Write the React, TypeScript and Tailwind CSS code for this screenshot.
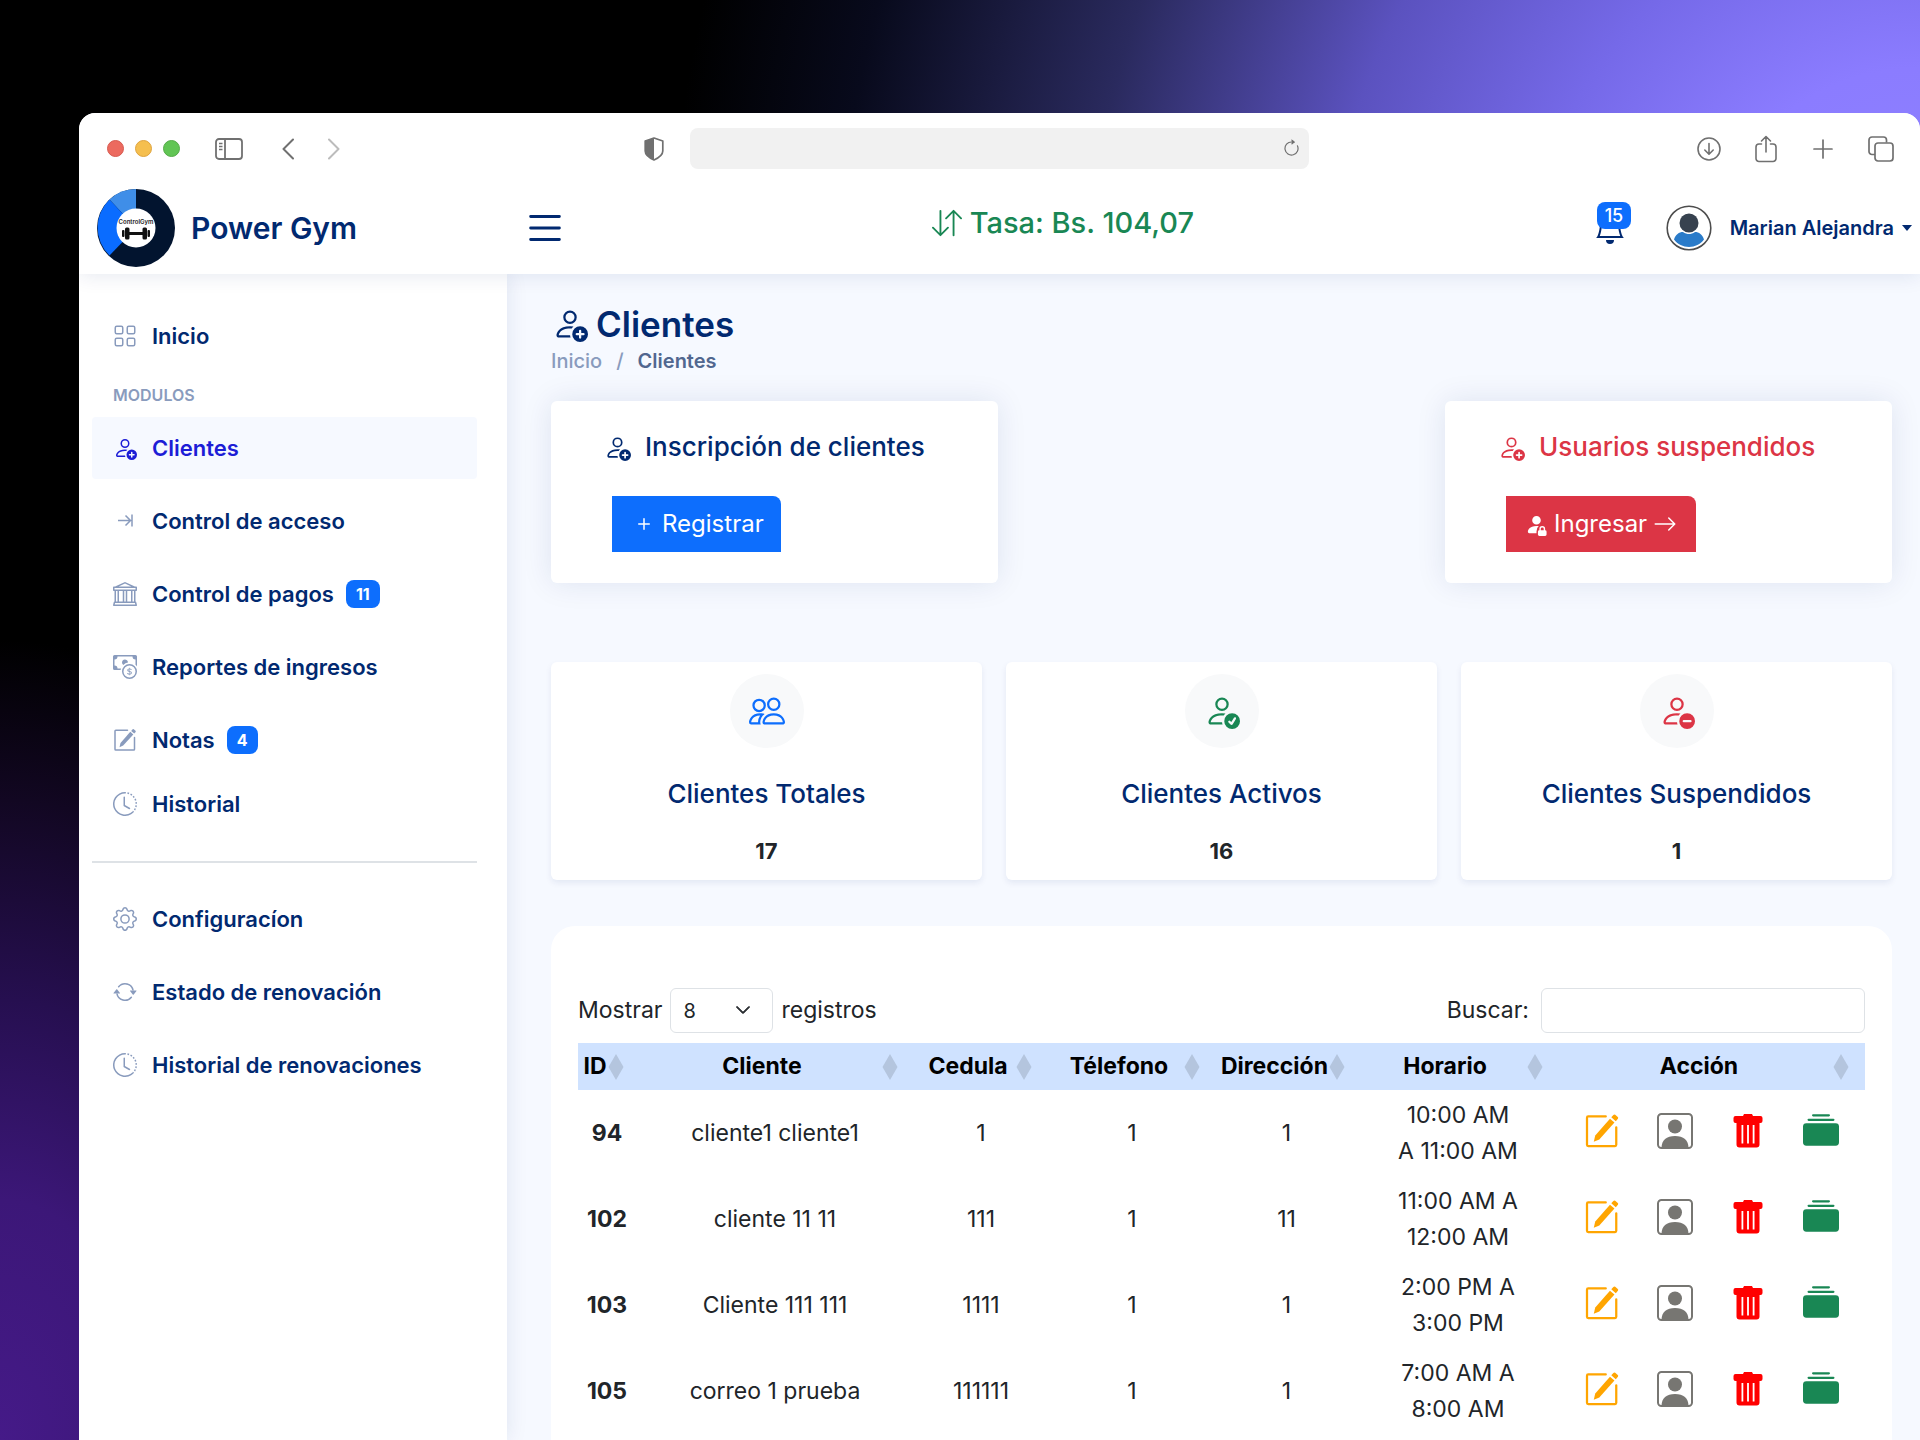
import { useState, type ReactNode } from "react";
import type { IconType } from "react-icons";
import {
  BsArrowClockwise,
  BsArrowDownUp,
  BsArrowRepeat,
  BsArrowRight,
  BsBank,
  BsBell,
  BsCashCoin,
  BsChevronDown,
  BsClockHistory,
  BsCollectionFill,
  BsGear,
  BsGrid,
  BsList,
  BsPeople,
  BsPersonAdd,
  BsPersonCheck,
  BsPersonDash,
  BsPersonFillLock,
  BsPlus,
} from "react-icons/bs";

type NavItem = {
  label: string;
  icon: ReactNode;
  badge?: number;
  active?: boolean;
  compact?: boolean;
};

type Cliente = {
  id: number;
  nombre: string;
  cedula: string;
  telefono: string;
  direccion: string;
  horario: [string, string];
};

const MODULOS: NavItem[] = [
  { label: "Clientes", icon: <BsPersonAdd />, active: true },
  { label: "Control de acceso", icon: <IconArrowToBar /> },
  { label: "Control de pagos", icon: <BsBank />, badge: 11 },
  { label: "Reportes de ingresos", icon: <BsCashCoin /> },
  { label: "Notas", icon: <IconEdit className="size-6" />, badge: 4 },
  { label: "Historial", icon: <BsClockHistory />, compact: true },
];

const AJUSTES: NavItem[] = [
  { label: "Configuracíon", icon: <BsGear /> },
  { label: "Estado de renovación", icon: <BsArrowRepeat /> },
  { label: "Historial de renovaciones", icon: <BsClockHistory /> },
];

const STATS: { label: string; value: number; icon: IconType; color: string }[] = [
  { label: "Clientes Totales", value: 17, icon: BsPeople, color: "text-[#0d6efd]" },
  { label: "Clientes Activos", value: 16, icon: BsPersonCheck, color: "text-[#198754]" },
  { label: "Clientes Suspendidos", value: 1, icon: BsPersonDash, color: "text-[#dc3545]" },
];

const COLUMNS = [
  { label: "ID", width: "w-[58px]", pad: "pr-3 pl-1" },
  { label: "Cliente", width: "", pad: "pr-4 pl-1.5" },
  { label: "Cedula", width: "w-[134px]", pad: "pr-4 pl-1.5" },
  { label: "Télefono", width: "w-[168px]", pad: "pr-4 pl-1.5" },
  { label: "Dirección", width: "w-[141px]", pad: "pr-3 pl-1" },
  { label: "Horario", width: "w-[202px]", pad: "pr-4 pl-1.5" },
  { label: "Acción", width: "w-[306px]", pad: "pr-4 pl-1.5" },
];

const CLIENTES: Cliente[] = [
  { id: 94, nombre: "cliente1 cliente1", cedula: "1", telefono: "1", direccion: "1", horario: ["10:00 AM", "A 11:00 AM"] },
  { id: 102, nombre: "cliente 11 11", cedula: "111", telefono: "1", direccion: "11", horario: ["11:00 AM A", "12:00 AM"] },
  { id: 103, nombre: "Cliente 111 111", cedula: "1111", telefono: "1", direccion: "1", horario: ["2:00 PM A", "3:00 PM"] },
  { id: 105, nombre: "correo 1 prueba", cedula: "111111", telefono: "1", direccion: "1", horario: ["7:00 AM A", "8:00 AM"] },
];

const ACCIONES = [
  { label: "Editar", icon: IconEdit, style: "size-9 text-[#ffa500]" },
  { label: "Ver perfil", icon: IconProfile, style: "size-9 text-[#777672]" },
  { label: "Eliminar", icon: IconTrash, style: "size-9 text-[#ff0000]" },
  { label: "Renovaciones", icon: BsCollectionFill, style: "size-9 text-[#198754]" },
];

type IconProps = { className?: string };

function IconArrowToBar() {
  return (
    <svg viewBox="0 0 24 24" fill="none" stroke="currentColor" strokeWidth="1.5" aria-hidden>
      <path d="M5 11.5h12M12.5 6.5l5 5-5 5M19 5.5v12" />
    </svg>
  );
}

function IconEdit({ className }: IconProps) {
  return (
    <svg viewBox="0 0 24 24" className={className} aria-hidden>
      <path d="M14.5 2.3H2.8a.8.8 0 0 0-.8.8v18.100a.8.8 0 0 0 .8.8h17.900a.8.8 0 0 0 .8-.8V9.500" fill="none" stroke="currentColor" strokeWidth="1.500" strokeLinecap="round" />
      <path d="M17.300 3.800 20.300 6.400 10.200 17.600 6.500 19.200 7.500 15Z" fill="currentColor" />
      <path d="M18.200 2.900 19.600 1.300a.9.9 0 0 1 1.200-.1l1.700 1.500a.9.9 0 0 1 .1 1.200L21.200 5.500Z" fill="currentColor" />
    </svg>
  );
}

function IconProfile({ className }: IconProps) {
  return (
    <svg viewBox="0 0 36 36" className={className} aria-hidden>
      <rect x="1" y="1" width="34" height="34" rx="3.500" fill="none" stroke="currentColor" strokeWidth="2" />
      <circle cx="18" cy="13.500" r="7" fill="currentColor" />
      <path d="M4.500 35c0-8 5-12 13.500-12s13.500 4 13.500 12Z" fill="currentColor" />
    </svg>
  );
}

function IconTrash({ className }: IconProps) {
  return (
    <svg viewBox="0 0 36 36" className={className} aria-hidden>
      <path
        fillRule="evenodd"
        fill="currentColor"
        d="M14 1h8l1 2h7.500a2 2 0 0 1 2 2v3a2 2 0 0 1-2 2H29.500v21.500a3 3 0 0 1-3 3h-17a3 3 0 0 1-3-3V10h-1a2 2 0 0 1-2-2V5a2 2 0 0 1 2-2H13ZM11.500 12v18.500h1.800V12ZM17.100 12v18.500h1.800V12ZM22.700 12v18.500h1.800V12Z"
      />
    </svg>
  );
}

function Logo() {
  return (
    <svg viewBox="0 0 78 78" className="size-[78px] shrink-0" role="img" aria-label="ControlGym">
      <circle cx="39" cy="39" r="39" fill="#02142f" />
      <path d="M39 39V0A39 39 0 0 0 12.5 10.4Z" fill="#3f8ee8" />
      <path d="M39 39 12.5 10.4A39 39 0 0 0 12.5 66.5Z" fill="#0a6cff" />
      <circle cx="39" cy="39" r="19.5" fill="#fff" />
      <text x="39" y="35" textAnchor="middle" fontSize="6" fontWeight="600" fill="#222">
        ControlGym
      </text>
      <g fill="#111">
        <rect x="25" y="41" width="2.5" height="7" rx="1" />
        <rect x="28" y="38.5" width="4.5" height="12" rx="1.5" />
        <rect x="32" y="43" width="14" height="3" />
        <rect x="45.5" y="38.5" width="4.5" height="12" rx="1.5" />
        <rect x="50.5" y="41" width="2.5" height="7" rx="1" />
      </g>
    </svg>
  );
}

function Avatar() {
  return (
    <svg viewBox="0 0 46 46" className="size-[46px]" aria-hidden>
      <circle cx="23" cy="23" r="21.8" fill="#fff" stroke="#4d4d4d" strokeWidth="1.6" />
      <circle cx="23" cy="18" r="9.5" fill="#37424f" />
      <path d="M8 34.5c1.500-5 5-7.500 9-7.500 2 1.400 4 2 6 2s4-.6 6-2c4 0 7.500 2.500 9 7.500-3.600 4.700-9 7.500-15 7.500S11.600 39.200 8 34.500Z" fill="#2a7bc9" />
    </svg>
  );
}

const chromeBtn = "flex items-center justify-center text-[#707070]";

function BrowserBar() {
  return (
    <div className="flex h-[71px] items-center pr-[26px] pl-7">
      <div className="flex gap-[11px]">
        <span className="size-[17px] rounded-full border border-[#d75a50] bg-[#ec6a5f]" />
        <span className="size-[17px] rounded-full border border-[#dfa43f] bg-[#f5bf4f]" />
        <span className="size-[17px] rounded-full border border-[#55ab48] bg-[#61c554]" />
      </div>
      <button type="button" aria-label="Barra lateral" className={`ml-[35px] ${chromeBtn}`}>
        <svg viewBox="0 0 28 22" className="h-[22px] w-7" fill="none" stroke="currentColor" strokeWidth="1.8">
          <rect x="1" y="1" width="26" height="20" rx="3" />
          <path d="M10 1v20" />
          <path d="M4 5.500h3.500M4 8.500h3.500M4 11.500h3.500" strokeWidth="1.3" />
        </svg>
      </button>
      <button type="button" aria-label="Atrás" className={`ml-[39px] ${chromeBtn}`}>
        <svg viewBox="0 0 12 22" className="h-[22px] w-3" fill="none" stroke="currentColor" strokeWidth="2" strokeLinecap="round" strokeLinejoin="round">
          <path d="M11 1.500 1.500 11l9.500 9.500" />
        </svg>
      </button>
      <button type="button" aria-label="Adelante" className="ml-[34px] flex text-[#bcbcbc]">
        <svg viewBox="0 0 12 22" className="h-[22px] w-3" fill="none" stroke="currentColor" strokeWidth="2" strokeLinecap="round" strokeLinejoin="round">
          <path d="M1 1.500 10.500 11 1 20.500" />
        </svg>
      </button>
      <div className="flex min-w-0 flex-1 items-center justify-center gap-[26px] pr-[84px]">
        <svg viewBox="0 0 20 24" className="h-6 w-5 shrink-0 text-[#707070]" aria-hidden>
          <path d="M10 1 18.800 4v10c0 4-4 6.800-8.800 9-4.800-2.200-8.800-5-8.800-9V4Z" fill="none" stroke="currentColor" strokeWidth="1.7" strokeLinejoin="round" />
          <path d="M10 1v22c-4.800-2.200-8.800-5-8.800-9V4Z" fill="currentColor" />
        </svg>
        <div className="flex h-[41px] w-[619px] items-center rounded-lg bg-[#f1f1f1] pr-2">
          <input type="text" aria-label="Dirección web" className="min-w-0 flex-1 bg-transparent px-3 outline-none" />
          <button type="button" aria-label="Recargar" className={chromeBtn}>
            <BsArrowClockwise className="size-[19px]" />
          </button>
        </div>
      </div>
      <div className="flex items-center gap-[33px]">
        <button type="button" aria-label="Descargas" className={chromeBtn}>
          <svg viewBox="0 0 24 24" className="size-6" fill="none" stroke="currentColor" strokeWidth="1.6" strokeLinecap="round" strokeLinejoin="round">
            <circle cx="12" cy="12" r="11" />
            <path d="M12 6.500v10.500M7.800 13l4.200 4.200 4.200-4.200" />
          </svg>
        </button>
        <button type="button" aria-label="Compartir" className={chromeBtn}>
          <svg viewBox="0 0 24 28" className="h-7 w-6" fill="none" stroke="currentColor" strokeWidth="1.6" strokeLinecap="round" strokeLinejoin="round">
            <path d="M7.500 9H5a3 3 0 0 0-3 3v11.500a3 3 0 0 0 3 3h14a3 3 0 0 0 3-3V12a3 3 0 0 0-3-3h-2.500M12 17V1.500M7.500 6 12 1.500 16.500 6" />
          </svg>
        </button>
        <button type="button" aria-label="Nueva pestaña" className={chromeBtn}>
          <svg viewBox="0 0 24 24" className="size-6" fill="none" stroke="currentColor" strokeWidth="1.7" strokeLinecap="round">
            <path d="M12 3v18M3 12h18" />
          </svg>
        </button>
        <button type="button" aria-label="Pestañas" className={chromeBtn}>
          <svg viewBox="0 0 26 26" className="size-[26px]" fill="none" stroke="currentColor" strokeWidth="1.7">
            <path d="M7 18.500H4a3 3 0 0 1-3-3V4a3 3 0 0 1 3-3h11.500a3 3 0 0 1 3 3v2.500" />
            <rect x="7" y="7" width="18" height="18" rx="3" />
          </svg>
        </button>
      </div>
    </div>
  );
}

function Header() {
  return (
    <header className="relative z-20 rounded-t-2xl bg-white shadow-[0_2px_20px_rgba(1,41,112,0.1)]">
      <BrowserBar />
      <div className="flex h-[90px] items-center pr-2 pb-0.5 pl-[18px]">
        <a href="#" className="flex w-[355px] items-center gap-4 text-3xl font-semibold text-[#012970]">
          <Logo />
          Power Gym
        </a>
        <button type="button" aria-label="Menú" className="ml-[70px] text-[#012970]">
          <BsList className="size-[46px]" />
        </button>
        <p className="flex flex-1 items-center justify-center pr-9 pb-2.5 text-[29px] font-medium text-[#198754]">
          <span className="flex items-center gap-2">
            <BsArrowDownUp className="size-[30px]" />
            Tasa: Bs. 104,07
          </span>
        </p>
        <button type="button" aria-label="15 notificaciones" className="relative text-[#012970]">
          <BsBell className="size-8" />
          <span className="absolute -top-2.5 left-[3px] rounded-lg bg-[#0d6efd] px-2 text-lg leading-[27px] font-medium text-white">15</span>
        </button>
        <button type="button" className="ml-10 flex items-center text-xl font-semibold text-[#012970]">
          <Avatar />
          <span className="ml-[18px]">Marian Alejandra</span>
          <svg viewBox="0 0 10 6" className="ml-2 h-1.5 w-2.5" aria-hidden>
            <path d="M0 0h10L5 6Z" fill="currentColor" />
          </svg>
        </button>
      </div>
    </header>
  );
}

function NavLink({ item }: { item: NavItem }) {
  const look = item.active ? "bg-[#f6f9ff] text-[#1d1dd6]" : "text-[#012970]";
  const height = item.compact ? "h-[44px]" : "h-[62px]";
  return (
    <li>
      <a href="#" className={`flex items-center rounded pl-[21px] text-[22px] font-semibold ${height} ${look}`}>
        <span
          className={`mr-[15px] flex size-6 shrink-0 items-center justify-center text-2xl [&>svg]:max-h-6 [&>svg]:max-w-6 ${
            item.active ? "" : "text-[#899bbd]"
          }`}
        >
          {item.icon}
        </span>
        {item.label}
        {item.badge !== undefined && (
          <span className="ml-3 rounded-lg bg-[#0d6efd] px-2.5 text-base leading-7 font-bold text-white">{item.badge}</span>
        )}
      </a>
    </li>
  );
}

function Sidebar() {
  return (
    <aside className="relative z-10 w-[428px] shrink-0 bg-white pt-[31px] pr-[30px] pl-[13px] shadow-[0_0_20px_rgba(1,41,112,0.1)]">
      <nav>
        <ul>
          <NavLink item={{ label: "Inicio", icon: <BsGrid /> }} />
        </ul>
        <p className="mt-4 mb-2.5 pl-[21px] text-base leading-6 font-semibold text-[#899bbd] uppercase">Modulos</p>
        <ul className="flex flex-col gap-[11px]">
          {MODULOS.map((item) => (
            <NavLink key={item.label} item={item} />
          ))}
        </ul>
        <hr className="mt-[35px] mb-[25px] border-t-2 border-[#dee2e6]" />
        <ul className="flex flex-col gap-[11px]">
          {AJUSTES.map((item) => (
            <NavLink key={item.label} item={item} />
          ))}
        </ul>
      </nav>
    </aside>
  );
}

const actionCard = "h-[182px] rounded-md bg-white pt-7 shadow-[0_0_30px_rgba(1,41,112,0.1)]";
const actionTitle = "flex items-center gap-3.5 pl-[53px] text-[26px] leading-9 font-medium";
const actionBtn = "mt-[31px] ml-[61px] flex h-14 items-center rounded-tr-lg text-2xl text-white";

function TopCards() {
  return (
    <div className="mt-[26px] grid grid-cols-3">
      <section className={actionCard}>
        <h2 className={`text-[#012970] ${actionTitle}`}>
          <BsPersonAdd className="size-[27px]" />
          Inscripción de clientes
        </h2>
        <button type="button" className={`bg-[#0d6efd] pr-[17px] pl-5 ${actionBtn}`}>
          <BsPlus className="mr-1.5 size-6" />
          Registrar
        </button>
      </section>
      <section className={`col-start-3 ${actionCard}`}>
        <h2 className={`text-[#dc3545] ${actionTitle}`}>
          <BsPersonAdd className="size-[27px]" />
          Usuarios suspendidos
        </h2>
        <button type="button" className={`bg-[#dc3545] px-[19px] ${actionBtn}`}>
          <BsPersonFillLock className="mr-1.5 size-[23px]" />
          Ingresar
          <BsArrowRight className="ml-1.5 size-6" />
        </button>
      </section>
    </div>
  );
}

function Stats() {
  return (
    <div className="mt-[79px] grid grid-cols-3 gap-6">
      {STATS.map(({ label, value, icon: Icon, color }) => (
        <section key={label} className="flex h-[218px] flex-col items-center rounded-md bg-white pt-3 shadow-[0_3px_6px_rgba(1,41,112,0.08)]">
          <span className={`flex size-[74px] items-center justify-center rounded-full bg-[#f8f9fa] ${color}`}>
            <Icon className="size-9" />
          </span>
          <h2 className="mt-7 text-[26px] leading-9 font-medium text-[#012970]">{label}</h2>
          <p className="mt-[23px] text-[22px] leading-8 font-bold text-[#212529]">{value}</p>
        </section>
      ))}
    </div>
  );
}

function ClientesTable() {
  const [size, setSize] = useState("8");
  const [query, setQuery] = useState("");
  const rows = CLIENTES.filter((c) => c.nombre.toLowerCase().includes(query.trim().toLowerCase())).slice(0, Number(size));

  return (
    <section className="mt-[46px] flex-1 rounded-t-3xl bg-white px-[27px] pt-[62px] text-[23px] text-[#212529]">
      <div className="flex items-center justify-between">
        <label className="flex items-center gap-2">
          Mostrar
          <span className="relative flex">
            <select
              value={size}
              onChange={(e) => setSize(e.target.value)}
              className="h-[45px] w-[103px] appearance-none rounded-md border border-[#dee2e6] bg-white pl-3 text-xl text-[#212529] outline-none"
            >
              <option value="8">8</option>
              <option value="25">25</option>
              <option value="50">50</option>
            </select>
            <BsChevronDown className="pointer-events-none absolute top-3.5 right-[22px] size-4" strokeWidth="1" />
          </span>
          registros
        </label>
        <label className="flex items-center gap-3">
          Buscar:
          <input
            type="search"
            value={query}
            onChange={(e) => setQuery(e.target.value)}
            className="h-[45px] w-[324px] rounded-md border border-[#dee2e6] px-3 outline-none"
          />
        </label>
      </div>
      <table className="mt-2.5 w-full table-fixed border-collapse text-center">
        <thead>
          <tr className="bg-[#cfe2ff] text-black">
            {COLUMNS.map((col) => (
              <th key={col.label} scope="col" className={`h-[47px] p-0 ${col.width}`}>
                <button type="button" className={`flex w-full items-center font-bold ${col.pad}`}>
                  <span className="min-w-0 flex-1">{col.label}</span>
                  <svg viewBox="0 0 16 26" className="h-[26px] w-4 shrink-0" aria-hidden>
                    <path d="M8 0l7.500 13L8 26 .5 13Z" fill="#b4c5de" />
                  </svg>
                </button>
              </th>
            ))}
          </tr>
        </thead>
        <tbody>
          {rows.map((c) => (
            <tr key={c.id} className="h-[86px]">
              <th scope="row" className="font-bold">{c.id}</th>
              <td>{c.nombre}</td>
              <td>{c.cedula}</td>
              <td>{c.telefono}</td>
              <td>{c.direccion}</td>
              <td className="leading-9">
                {c.horario[0]}
                <br />
                {c.horario[1]}
              </td>
              <td>
                <div className="flex justify-center pr-0.5 pb-1">
                  {ACCIONES.map(({ label, icon: Icon, style }) => (
                    <button key={label} type="button" aria-label={label} className="flex h-9 w-[73px] items-center justify-center">
                      <Icon className={style} />
                    </button>
                  ))}
                </div>
              </td>
            </tr>
          ))}
        </tbody>
      </table>
    </section>
  );
}

export default function App() {
  return (
    <div className="flex min-h-screen flex-col bg-black bg-[radial-gradient(circle_at_100%_20%,#9083ff_0px,#8b7cff_220px,#7569e8_390px,#5b52bf_590px,#2a2a5e_830px,#080a1c_1080px,transparent_1250px),radial-gradient(ellipse_500px_800px_at_0%_100%,#451a88_0%,#3c1778_30%,#260f50_55%,#120722_80%,transparent_100%)] pt-[113px] pl-[79px] font-[Inter,sans-serif]">
      <div className="flex flex-1 flex-col overflow-hidden rounded-t-2xl bg-white">
        <Header />
        <div className="flex flex-1">
          <Sidebar />
          <main className="flex min-w-0 flex-1 flex-col bg-[#f6f9ff] pt-7 pr-7 pl-11">
            <h1 className="flex items-center gap-2 pl-px text-[35px] leading-[44px] font-semibold text-[#012970]">
              <BsPersonAdd className="size-9" />
              Clientes
            </h1>
            <nav aria-label="Ruta" className="mt-px flex gap-[14px] text-xl leading-7 font-medium text-[#899bbd]">
              <a href="#">Inicio</a>
              <span>/</span>
              <span className="font-semibold text-[#51678f]">Clientes</span>
            </nav>
            <TopCards />
            <Stats />
            <ClientesTable />
          </main>
        </div>
      </div>
    </div>
  );
}
